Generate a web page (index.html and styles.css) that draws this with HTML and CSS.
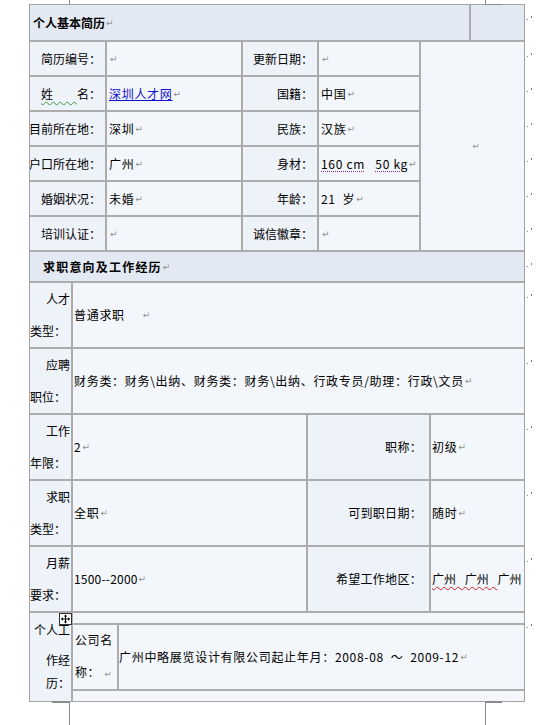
FILE: index.html
```html
<!DOCTYPE html>
<html lang="zh-CN">
<head>
<meta charset="utf-8">
<title>个人简历</title>
<link rel="stylesheet" href="styles.css">
</head>
<body>
<div class="page">
  <div class="doc">
    <div class="hrow">
      <div class="cell head">个人基本简历<span class="pm">↵</span></div>
      <div class="cell head"></div>
    </div>

    <div class="grid-a">
      <div class="cell lbl">简历编号：</div>
      <div class="cell val"><span class="pm">↵</span></div>
      <div class="cell lbl">更新日期：</div>
      <div class="cell val"><span class="pm">↵</span></div>
      <div class="cell photo"><span class="pm">↵</span></div>

      <div class="cell lbl"><span class="wavy-g">姓&#x3000;&#x3000;</span>名：</div>
      <div class="cell val"><span class="link">深圳人才网</span><span class="pm">↵</span></div>
      <div class="cell lbl">国籍：</div>
      <div class="cell val">中国<span class="pm">↵</span></div>

      <div class="cell lbl">目前所在地：</div>
      <div class="cell val">深圳<span class="pm">↵</span></div>
      <div class="cell lbl">民族：</div>
      <div class="cell val">汉族<span class="pm">↵</span></div>

      <div class="cell lbl">户口所在地：</div>
      <div class="cell val">广州<span class="pm">↵</span></div>
      <div class="cell lbl">身材：</div>
      <div class="cell val"><span class="dotted">160 cm</span>&nbsp;&nbsp;&nbsp;<span class="dotted">50 kg</span><span class="pm">↵</span></div>

      <div class="cell lbl">婚姻状况：</div>
      <div class="cell val">未婚<span class="pm">↵</span></div>
      <div class="cell lbl">年龄：</div>
      <div class="cell val">21&nbsp;&nbsp;岁<span class="pm">↵</span></div>

      <div class="cell lbl">培训认证：</div>
      <div class="cell val"><span class="pm">↵</span></div>
      <div class="cell lbl">诚信徽章：</div>
      <div class="cell val"><span class="pm">↵</span></div>
    </div>

    <div class="cell head head2">求职意向及工作经历<span class="pm">↵</span></div>

    <div class="grid-b">
      <div class="cell bl"><span>人才</span><span>类型：<i class="tab"></i></span></div>
      <div class="cell bv wide">普通求职<span class="pm far">↵</span></div>

      <div class="cell bl"><span>应聘</span><span>职位：<i class="tab"></i></span></div>
      <div class="cell bv wide">财务类：财务\出纳、财务类：财务\出纳、行政专员/助理：行政\文员<span class="pm">↵</span></div>

      <div class="cell bl"><span>工作</span><span>年限：<i class="tab"></i></span></div>
      <div class="cell bv">2<span class="pm">↵</span></div>
      <div class="cell bl2">职称：</div>
      <div class="cell bv">初级<span class="pm">↵</span></div>

      <div class="cell bl"><span>求职</span><span>类型：<i class="tab"></i></span></div>
      <div class="cell bv">全职<span class="pm">↵</span></div>
      <div class="cell bl2">可到职日期：</div>
      <div class="cell bv">随时<span class="pm">↵</span></div>

      <div class="cell bl"><span>月薪</span><span>要求：<i class="tab"></i></span></div>
      <div class="cell bv"><span class="num">1500--2000</span><span class="pm">↵</span></div>
      <div class="cell bl2">希望工作地区：</div>
      <div class="cell bv cities"><span class="wavy-r">广州&nbsp;广州&nbsp;</span>广州</div>

      <div class="cell bl last"><span class="l1">个人工</span><span class="l2">作经</span><span class="l3">历：</span></div>
      <div class="nest">
        <div class="strip"></div>
        <div class="nrow">
          <div class="cell nl"><span>公司名</span><span>称：<span class="pm">↵</span></span></div>
          <div class="cell nv">广州中略展览设计有限公司起止年月：2008-08&nbsp;&nbsp;～&nbsp;&nbsp;2009-12<span class="pm">↵</span></div>
        </div>
        <div class="strip"></div>
      </div>
    </div>
  </div>

  <div class="marks">
    <i class="mk h37"></i><i class="mk h35"></i><i class="mk h35"></i><i class="mk h35"></i>
    <i class="mk h35"></i><i class="mk h35"></i><i class="mk h35"></i><i class="mk h31"></i>
    <i class="mk h66"></i><i class="mk h66"></i><i class="mk h66"></i><i class="mk h66"></i>
    <i class="mk h66"></i><i class="mk h66"></i>
  </div>

  <svg class="move" width="13" height="12" viewBox="0 0 13 12" aria-hidden="true">
    <rect x="0.5" y="0.5" width="12" height="11" fill="#ffffff" stroke="#333333"/>
    <path d="M6.5 2 V10 M2.5 6 H10.5" stroke="#000" stroke-width="1" fill="none"/>
    <path d="M6.5 1.5 L4.8 3.5 H8.2 Z M6.5 10.5 L4.8 8.5 H8.2 Z M2 6 L4 4.3 V7.7 Z M11 6 L9 4.3 V7.7 Z" fill="#000"/>
  </svg>

  <span class="crop tl-v"></span>
  <span class="crop tr-v"></span>
  <span class="crop tr-h"></span>
  <span class="crop bl-v"></span>
  <span class="crop bl-h"></span>
  <span class="crop br-v"></span>
  <span class="crop br-h"></span>
</div>
</body>
</html>
```

FILE: styles.css
```css
* { box-sizing: border-box; }

html, body {
  margin: 0;
  background: #ffffff;
}

body {
  font-family: "Noto Sans CJK SC", "Noto Sans", sans-serif;
  font-size: 12px;
  color: #000000;
}

.page {
  position: relative;
  display: flex;
  align-items: flex-start;
  height: 725px;
  padding: 4px 0 0 29px;
  overflow: hidden;
}

.doc {
  width: 496px;
  border: 1px solid #a4a4a4;
  background: #acacac;
  display: flex;
  flex-direction: column;
  gap: 2px;
}

.cell {
  background: #f3f6fa;
  display: flex;
  align-items: center;
  overflow: hidden;
  white-space: nowrap;
  line-height: 16px;
}

.pm {
  font-family: "DejaVu Sans", sans-serif;
  font-size: 9px;
  letter-spacing: 0;
  color: #8f8f8f;
  margin-left: 1px;
}
.pm.far { margin-left: 18px; }

/* header rows */
.hrow {
  display: grid;
  grid-template-columns: 439px 53px;
  gap: 2px;
  height: 35px;
}
.head {
  background: #e3e9f2;
  font-weight: bold;
  padding-left: 3px;
}
.head .pm { font-weight: normal; }
.head2 {
  height: 29px;
  padding-left: 13px;
  letter-spacing: 1.2px;
}

/* basic info grid */
.grid-a {
  display: grid;
  grid-template-columns: 75px 134px 74px 100px 103px;
  grid-template-rows: repeat(6, 33px);
  gap: 2px;
}
.lbl {
  background: #eef2f9;
  justify-content: flex-end;
  padding-right: 4px;
}
.val {
  padding-left: 2px;
  letter-spacing: 0.7px;
}
.photo {
  grid-column: 5;
  grid-row: 1 / span 6;
  justify-content: center;
  padding-left: 6px;
}

.link {
  color: #1010d0;
  text-decoration: underline;
}
.wavy-g {
  text-decoration: underline wavy #3c9a3c;
  text-decoration-thickness: 1px;
  text-underline-offset: 2px;
}
.wavy-r {
  text-decoration: underline wavy #d02020;
  text-decoration-thickness: 1px;
  text-underline-offset: 2px;
}
.dotted {
  text-decoration: underline dotted #9a3c9a;
  text-underline-offset: 2px;
}

/* job section grid */
.grid-b {
  display: grid;
  grid-template-columns: 41px 233px 121px 93px;
  grid-template-rows: repeat(5, 64px) 88px;
  gap: 2px;
}
.bl {
  background: #eef2f9;
  flex-direction: column;
  align-items: flex-end;
  justify-content: center;
  line-height: 32px;
  padding-right: 1px;
  overflow: visible;
}
.tab {
  display: inline-block;
  width: 4px;
}
.bl2 {
  background: #eef2f9;
  justify-content: flex-end;
  padding-right: 7px;
  letter-spacing: 0.3px;
}
.bv {
  padding-left: 1px;
  letter-spacing: 0.7px;
}
.wide { grid-column: 2 / span 3; }
.num { letter-spacing: 0.2px; }

.cities {
  letter-spacing: 0;
  word-spacing: 6px;
}

.bl.last {
  justify-content: flex-start;
  padding-top: 2px;
}
.bl.last .l1 { line-height: 30px; }
.bl.last .l2 { line-height: 30px; }
.bl.last .l3 { line-height: 16px; }

.nest {
  grid-column: 2 / span 3;
  display: flex;
  flex-direction: column;
  gap: 2px;
  background: #acacac;
}
.strip {
  height: 10px;
  background: #f3f6fa;
}
.nrow {
  display: grid;
  grid-template-columns: 44px 1fr;
  gap: 2px;
  height: 64px;
}
.nl {
  flex-direction: column;
  align-items: flex-start;
  justify-content: center;
  line-height: 32px;
  padding-left: 2px;
  letter-spacing: 0.6px;
}
.nl .pm { margin-left: 4px; }
.nv {
  padding-left: 0;
  letter-spacing: 0.7px;
}

/* end-of-row marks outside the table */
.marks {
  display: flex;
  flex-direction: column;
  padding-top: 12px;
  margin-left: 2px;
}
.mk {
  display: block;
  width: 6px;
  position: relative;
}
.mk::before {
  content: "";
  position: absolute;
  left: 0;
  top: 3px;
  width: 1px;
  height: 1px;
  background: #808080;
}
.mk::after {
  content: "";
  position: absolute;
  left: 4px;
  top: 0;
  width: 1px;
  height: 2px;
  background: #808080;
}
.h37 { height: 37px; }
.h35 { height: 35px; }
.h31 { height: 31px; }
.h66 { height: 66px; }

/* table move handle (overlay) */
.move {
  position: absolute;
  left: 59px;
  top: 613px;
}

/* page crop marks */
.crop {
  position: absolute;
  background: #8a8a8a;
}
.tl-v { left: 69px; top: 0; width: 1px; height: 4px; }
.tr-v { left: 485px; top: 0; width: 1px; height: 4px; }
.tr-h { left: 485px; top: 4px; width: 17px; height: 1px; }
.bl-v { left: 69px; top: 702px; width: 1px; height: 23px; }
.bl-h { left: 52px; top: 701px; width: 17px; height: 2px; }
.br-v { left: 485px; top: 702px; width: 1px; height: 23px; }
.br-h { left: 485px; top: 701px; width: 17px; height: 2px; }
```
